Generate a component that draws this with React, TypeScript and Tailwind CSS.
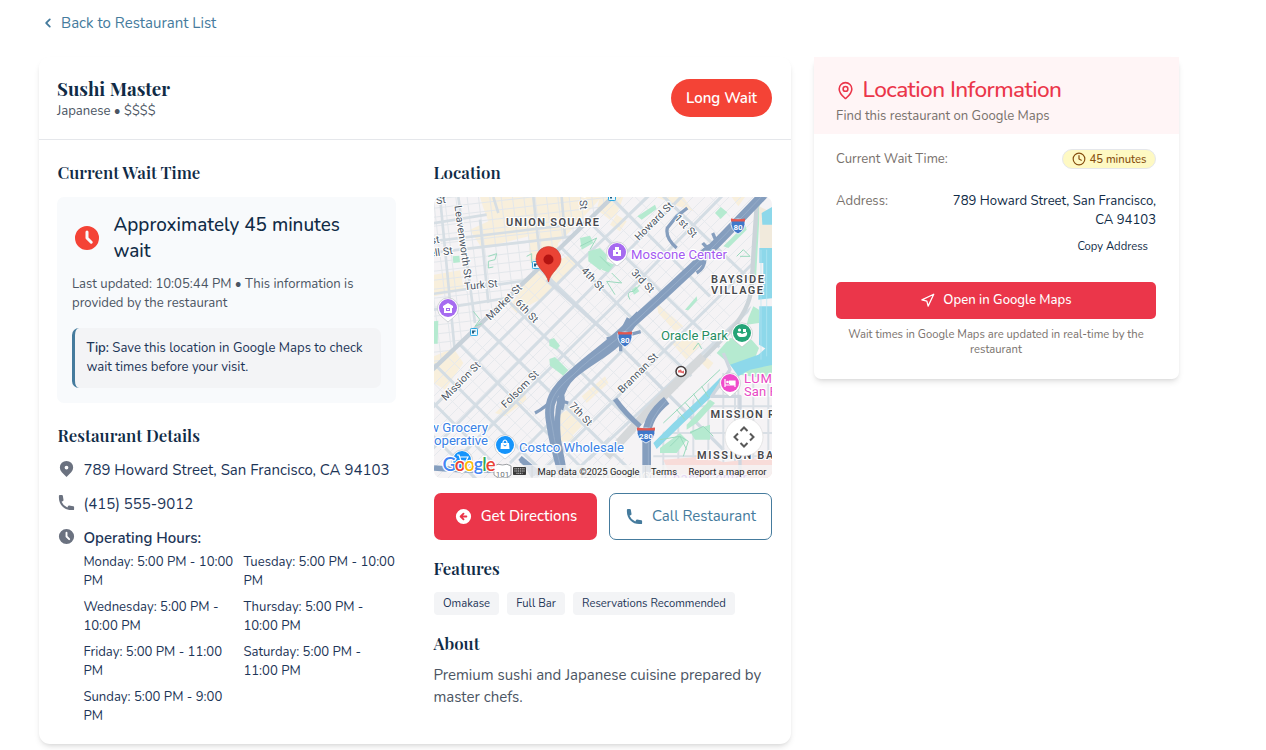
import React from "react";
import {
  HiArrowCircleLeft,
  HiChevronLeft,
  HiClock,
  HiLocationMarker,
  HiPhone,
} from "react-icons/hi";
import { Clock, MapPin, Navigation } from "lucide-react";

const hours = [
  ["Monday: 5:00 PM - 10:00", "PM"],
  ["Tuesday: 5:00 PM - 10:00", "PM"],
  ["Wednesday: 5:00 PM -", "10:00 PM"],
  ["Thursday: 5:00 PM -", "10:00 PM"],
  ["Friday: 5:00 PM - 11:00", "PM"],
  ["Saturday: 5:00 PM -", "11:00 PM"],
  ["Sunday: 5:00 PM - 9:00", "PM"],
];

const range = (from: number, to: number, step: number) =>
  Array.from({ length: Math.floor((to - from) / step) + 1 }, (_, i) => from + i * step);

function Heading({ children }: { children: React.ReactNode }) {
  return (
    <h2 className="pb-[2px] font-['Playfair_Display','Liberation_Serif',serif] text-[16.875px] leading-[26px] font-semibold whitespace-nowrap text-[#102b46]">
      {children}
    </h2>
  );
}

function StreetLabel({ x, y, angle, children }: { x: number; y: number; angle: number; children: string }) {
  return (
    <text
      transform={`translate(${x} ${y}) rotate(${angle})`}
      textAnchor="middle"
      dominantBaseline="central"
      fontSize="10.4"
      fill="#4a5462"
      stroke="#fff"
      strokeWidth="2"
      paintOrder="stroke"
      letterSpacing=".15"
    >
      {children}
    </text>
  );
}

function AreaLabel({ x, y, width, children }: { x: number; y: number; width: number; children: string }) {
  return (
    <text x={x} y={y} textLength={width} fontSize="11" fontWeight="600" fill="#48494d" stroke="#fff" strokeWidth="2.2" paintOrder="stroke">
      {children}
    </text>
  );
}

function Pin({ x, y, color, children }: { x: number; y: number; color: string; children?: React.ReactNode }) {
  return (
    <g transform={`translate(${x} ${y})`}>
      <path d="M0 14 L-6 9 A10.5 10.5 0 1 1 6 9 Z" fill="#fff" stroke="#b9bdc2" strokeWidth=".6" />
      <circle r="9" fill={color} />
      {children}
    </g>
  );
}

function Shield({ x, y, label }: { x: number; y: number; label: string }) {
  const w = label.length > 2 ? 9 : 7;
  return (
    <g transform={`translate(${x} ${y})`}>
      <path d={`M${-w} -6 Q0 -8 ${w} -6 Q${w + 1} 4 0 8 Q${-w - 1} 4 ${-w} -6Z`} fill="#3f77c9" stroke="#fff" strokeWidth=".8" />
      <path d={`M${-w} -7.5 Q0 -6 ${w} -7.5 V-4.5 H${-w}Z`} fill="#e25850" />
      <text y="3.7" textAnchor="middle" fontSize="8" fontWeight="700" fill="#fff">{label}</text>
    </g>
  );
}

/* Street network, drawn at three units to the pixel. */
function Streets() {
  return (
    <g transform="translate(430 193) scale(.33333)" fill="none">
      <defs>
        <clipPath id="north"><path d="M0 0H560L390 165L12 525H0Z" /></clipPath>
        <clipPath id="south"><path d="M560 0H975V270Q975 370 890 440L560 780L700 870H0V525L390 165Z" /></clipPath>
        <clipPath id="bay"><path d="M660 760L1030 360V870H640Z" /></clipPath>
      </defs>
      <g fill="#f8efdc">
        <path d="M150 12H515L430 105L385 150L375 205L300 210L296 130L155 165L120 110L175 85L160 45Z" />
        <path d="M300 250L330 230L420 185L440 215L350 310L310 330L260 360L240 340Z" />
        <path d="M12 245L90 232L102 290L12 310Z M12 490L70 465L100 510L45 590L12 570Z" />
        <path d="M510 12H580L560 65L540 80L500 50Z M680 12H760L790 55L745 40Z M905 12H945L925 40Z" />
        <path d="M385 665L445 635L455 700L420 735L385 720Z M370 690L445 740L375 750Z M195 660L280 580L290 620L225 670Z" />
        <path d="M455 610L525 550L535 570L470 630Z M680 330L760 400L735 415L685 360Z M725 450L765 415L815 455L770 500Z M820 485L850 510L835 530L805 500Z M560 65L590 85L570 115L540 95Z" />
      </g>
      <g clipPath="url(#north)">
        <g stroke="#e3e7eb" strokeWidth="3">
          {range(20, 700, 27).map((y) => <path key={y} d={`M0 ${y}L560 ${y - 64}`} />)}
          {range(-60, 540, 34).map((x) => <path key={x} d={`M${x} 0L${x + 62} 520`} />)}
        </g>
        <g stroke="#d6dee4" strokeWidth="8">
          <path d="M0 180L560 115M0 146L480 88M0 304L320 258M0 352L250 312M0 92L170 65M190 12L205 60M30 12L75 480M85 12L135 390M310 12L335 240M395 12L405 130M150 80L175 330" />
        </g>
      </g>
      <g clipPath="url(#south)">
        <g stroke="#e6e9ed" strokeWidth="3">
          {range(585, 1660, 36).map((n) => <path key={n} d={`M0 ${n}L${n} 0`} />)}
          {[-810, -720, -670, -590, -510, -455, -390, -335, -270, -205, -140, -75, 0, 55, 120, 190, 250, 310, 360, 440, 500, 560].map((n) => <path key={n} d={`M0 ${n}L900 ${n + 880}`} />)}
        </g>
        <g stroke="#d4dde4" strokeWidth="9">
          <path d="M0 652L430 225L665 0M0 775L500 270L765 0M90 790L560 330L885 0M240 810L580 470M300 870L990 190M475 800L980 330M400 870L540 735" />
          <path d="M345 115L700 470L900 660M290 190L560 450M200 290L690 770M130 370L620 850M70 435L500 870M0 500L370 870M0 620L240 860M465 75L790 390L930 520M550 20L840 310M690 0L960 260M0 720L150 870" />
        </g>
      </g>
      <path d="M0 537L390 165L560 0" stroke="#c7d1d9" strokeWidth="13" />
      <path d="M350 260L540 430L880 770" stroke="#d1dae2" strokeWidth="10" />
      <g clipPath="url(#bay)" stroke="#d9dfe5" strokeWidth="6">
        {range(700, 1020, 45).map((x) => <path key={x} d={`M${x} 540V870`} />)}
        <path d="M670 790H1030M700 720H1030M800 640H1030M915 600V850" />
      </g>
    </g>
  );
}

function Terrain() {
  return (
    <g transform="translate(430 193) scale(.33333)" fill="none" strokeLinecap="butt" strokeLinejoin="round">
      <g fill="#b5ead0">
        <path d="M475 175L510 165L530 185V215L510 232L475 205Z M450 135L480 128L490 150L455 170Z M530 205L552 215L535 238L515 230Z" />
        <path d="M68 190L88 188L90 208L70 210Z M12 385L25 383L23 452L12 452Z M358 440L372 435L390 458L380 470L358 458Z M358 498L375 492L415 532L400 548L360 518Z" />
        <path d="M622 70L675 35L680 48L635 80Z M855 60L872 42L892 58L872 78Z M765 350L800 310L802 322L775 352Z M605 290L618 280L628 295L612 305Z" />
        <path d="M880 160L945 95L950 110L895 165Z M975 12H990L987 95L977 275L970 220Z M955 375L970 340L987 350V390L950 395Z" />
        <path d="M860 480L900 435L965 440L987 465L975 495L905 520Z M910 510L1030 490V560L930 545Z" />
        <path d="M770 695L840 620L855 630L800 690L770 710Z M690 765L750 720L770 740L740 780H690Z M780 715L840 695V740H795Z" />
      </g>
      <path d="M700 800L830 790L880 808L1030 790V870H730Z" fill="#f8dcd9" />
      <path d="M987 40L1030 60V170H990Z" fill="#f1eadc" />
      <path d="M995 60L1030 40V95H997Z M988 165H1030V315L985 320V285H1000V210H988Z M988 340H1030V480L987 455Z M900 515L985 485L1030 445V515L960 530L925 550Z" fill="#8dd8ea" />
      <path d="M993 170V500M1010 170V490" stroke="#b9e7f2" strokeWidth="2" />
      <path d="M870 555L805 620L730 690L670 750L680 768L760 690L850 605L900 550Z" fill="#8dd8ea" />
      <g stroke="#9ad9bd" strokeWidth="3">
        <path d="M700 690L870 530M740 650L765 680M765 628L790 657M790 602L812 635M815 580L835 612M175 190l25-8-5 18-20 5v20l15-3M450 160l50-25-20 35M510 190l30 30M545 240l30 30-45-5 25 40M920 190l20-20 20 20h-30M130 355l20 25-15 20 20-8M600 320q-15-25 10-25l20-20M790 470l15-20 10 18M720 760l30-30 25 15-15 45" />
        <path d="M690 740l60-10 20 40M780 720l40-20 30 30M290 190l15-8v28" />
      </g>
      <path d="M983 0Q970 170 965 280Q960 350 895 420L560 760" stroke="#ccd4d9" strokeWidth="13" />
      <path d="M530 790L650 660L820 490" stroke="#d5d8da" strokeWidth="26" />
      <path d="M880 480L900 530L845 610H930V850" stroke="#ced6df" strokeWidth="10" />
      <g stroke="#859ebe">
        <path d="M1010 -5L890 120L790 222L690 315L600 395" strokeWidth="28" />
        <path d="M630 365C540 460 500 475 430 540C370 590 350 630 362 690C370 750 380 780 405 870" strokeWidth="27" />
        <path d="M615 385C560 480 500 490 430 550C375 600 380 690 385 740L405 850" strokeWidth="16" />
        <path d="M375 612Q345 645 315 660M380 620L415 630M395 600Q405 620 395 650M810 180L835 160L860 150Q855 135 848 120M818 150Q825 160 840 168M800 240Q825 225 825 195M530 438L600 425L632 416M572 475V420L595 375M740 165Q705 135 712 105L740 70L772 45" strokeWidth="10" />
        <path d="M310 850Q290 810 272 800M270 795L330 845M12 825Q140 835 200 830" strokeWidth="16" />
        <path d="M555 618Q585 660 630 700" strokeWidth="15" />
        <path d="M710 622Q650 670 650 730V870" strokeWidth="26" />
      </g>
      <path d="M1010 -5L890 120L790 222L690 315L600 400C540 465 500 475 430 545C370 595 350 630 365 690C375 750 380 780 405 870M655 870V730Q655 680 710 622" stroke="#9fb4cd" strokeWidth="2" />
    </g>
  );
}

function MapView() {
  return (
    <svg viewBox="434 197 338 281" className="block h-[281px] w-[338px] rounded-[7px] font-[Roboto,sans-serif]">
      <rect x="434" y="197" width="338" height="281" fill="#f5f3f5" />
      <Streets />
      <Terrain />
      <StreetLabel x={441} y={200} angle={-8}>St</StreetLabel>
      <StreetLabel x={463} y={242} angle={82}>Leavenworth St</StreetLabel>
      <StreetLabel x={435} y={240} angle={-8}>st</StreetLabel>
      <StreetLabel x={441} y={252} angle={-8}>ell St</StreetLabel>
      <StreetLabel x={481} y={285} angle={-6}>Turk St</StreetLabel>
      <StreetLabel x={504} y={302} angle={-45}>Market St</StreetLabel>
      <StreetLabel x={527} y={311} angle={46}>6th St</StreetLabel>
      <StreetLabel x={593} y={279} angle={46}>4th St</StreetLabel>
      <StreetLabel x={583} y={201} angle={85}>y St</StreetLabel>
      <StreetLabel x={654} y={221} angle={-45}>Howard St</StreetLabel>
      <StreetLabel x={686} y={226} angle={46}>1st St</StreetLabel>
      <StreetLabel x={643} y={281} angle={46}>3rd St</StreetLabel>
      <StreetLabel x={461} y={381} angle={-45}>Mission St</StreetLabel>
      <StreetLabel x={520} y={389} angle={-45}>Folsom St</StreetLabel>
      <StreetLabel x={581} y={414} angle={46}>7th St</StreetLabel>
      <StreetLabel x={638} y={373} angle={-45}>Brannan St</StreetLabel>
      <AreaLabel x={506} y={225.5} width={93}>UNION SQUARE</AreaLabel>
      <AreaLabel x={711} y={283} width={53}>BAYSIDE</AreaLabel>
      <AreaLabel x={711} y={294} width={52}>VILLAGE</AreaLabel>
      <AreaLabel x={710.5} y={418} width={90}>MISSION ROCK</AreaLabel>
      <AreaLabel x={697} y={458.5} width={84}>MISSION BAY</AreaLabel>
      <Shield x={738} y={226} label="80" />
      <Shield x={625} y={339} label="80" />
      <Shield x={646} y={435} label="280" />
      {[[536, 265], [474, 332], [612, 197]].map(([x, y], i) => (
        <g key={i} transform={`translate(${x} ${y})`}>
          <rect x="-3.5" y="-3.5" width="7" height="7" rx=".8" fill="#e8f8ff" stroke="#2fa9e2" />
          <path d="M-2-1.500h3.500v1.200h-1.500v1.800h-2z" fill="#235e83" />
        </g>
      ))}
      <g fontSize="13" stroke="#fff" strokeWidth="2.5" paintOrder="stroke" strokeLinejoin="round">
        <text x="631" y="258.500" textLength="96" lengthAdjust="spacingAndGlyphs" fill="#a45af1">Moscone Center</text>
        <text x="661" y="340" textLength="67" lengthAdjust="spacingAndGlyphs" fill="#258d63">Oracle Park</text>
        <text x="744" y="383" textLength="37" fill="#e749c4">LUMA</text>
        <text x="744" y="396" textLength="37" fill="#e749c4">San Fr</text>
        <text x="429" y="431.500" textLength="59" lengthAdjust="spacingAndGlyphs" fill="#3981e6">w Grocery</text>
        <text x="434" y="444.500" textLength="54" lengthAdjust="spacingAndGlyphs" fill="#3981e6">operative</text>
        <text x="519" y="452" textLength="105" lengthAdjust="spacingAndGlyphs" fill="#3981e6">Costco Wholesale</text>
        <text x="553" y="481" fontSize="10.400" textLength="104" fill="#a9abaf">DESIGN DISTRICT</text>
        <text x="664" y="482" textLength="83" fill="#a45af1">Chase Center</text>
      </g>
      <Pin x={617} y={252} color="#a66bf0">
        <path d="M-4-2h2v-3h4v3h2v6h-8z" fill="#fff" /><path d="M-1 0h2v2h-2z" fill="#a66bf0" />
      </Pin>
      <Pin x={448} y={308} color="#a66bf0">
        <path d="M-5-2L0-5L5-2V0H4V5H-4V0H-5Z" fill="#fff" /><path d="M-2 0h4v3h-4z" fill="#a66bf0" /><path d="M-1 1h2v1h-2z" fill="#fff" />
      </Pin>
      <Pin x={742} y={333} color="#24a477">
        <path d="M-5 0Q-2-1 0 1L5-1Q6 4 1 4H-2Q-5 3-5 0ZM1-4H4V-1H1Z" fill="#fff" /><circle cx="-2.500" cy="-3" r="1.600" fill="#fff" />
      </Pin>
      <Pin x={730} y={383} color="#f04bcb">
        <path d="M-5-4V4M-5 2H5V4M5 2V-2H-.5V1" stroke="#fff" strokeWidth="1.200" fill="none" /><path d="M0-2H5V2H0Z" fill="#fff" /><circle cx="-2.500" cy="-1" r="1.300" fill="#fff" />
      </Pin>
      <Pin x={505} y={445} color="#1594fb">
        <path d="M-4-2h8l.5 6h-9z" fill="#fff" /><path d="M-2-2v-1q2-4 4 0v1" stroke="#fff" fill="none" strokeWidth="1.200" /><path d="M-1.500 0Q0 2 1.500 0" stroke="#1594fb" fill="none" />
      </Pin>
      <Pin x={462} y={460} color="#1594fb">
        <path d="M-5-5h2l2 6h5l2-4h-8" stroke="#fff" strokeWidth="1.200" fill="none" />
      </Pin>
      <g transform="translate(681 371.500)">
        <circle r="5" fill="#fff" stroke="#453c3c" strokeWidth="1.500" /><path d="M-3 1V-1L0-2L1 0L3-1V2L-1 1Z" fill="#e4696a" />
      </g>
      <path d="M548.500 282C546.500 272 536 268 536 259A12.500 12.500 0 0 1 561 259C561 268 550.500 272 548.500 282Z" fill="#ea4335" stroke="#c5372c" strokeWidth=".6" />
      <circle cx="548.500" cy="259.500" r="5" fill="#b31412" />
      <path d="M512 465H772V478H512Z" fill="#f5f5f5" fillOpacity=".8" />
      <path d="M532 466V478M645.500 466V478" stroke="#d3d5d8" strokeWidth=".8" />
      <path d="M494 466Q498 463 502.500 465Q507 463 511 466V475Q507 479 502.500 478Q498 479 494 475Z" fill="#fff" stroke="#85898d" strokeWidth=".8" />
      <text x="502.500" y="476.500" textAnchor="middle" fontSize="8" fill="#6b7075">101</text>
      <rect x="513" y="467" width="13" height="8" rx=".8" fill="#3a3a3a" />
      <path d="M514.500 468.800H525M514.500 471H525M516.500 473.300H522.500" stroke="#fff" strokeWidth=".9" strokeDasharray="1 .8" />
      <g fontSize="9.300" fill="#1e1e1e">
        <text x="537.500" y="475" textLength="102" lengthAdjust="spacingAndGlyphs">Map data ©2025 Google</text>
        <text x="651" y="475" textLength="26" lengthAdjust="spacingAndGlyphs">Terms</text>
        <text x="688.500" y="475" textLength="78" lengthAdjust="spacingAndGlyphs">Report a map error</text>
      </g>
      <text x="442.500" y="471" fontSize="18.500" fontFamily="Lato, sans-serif" fontWeight="600" textLength="53" stroke="#fff" strokeWidth="2.500" paintOrder="stroke">
        <tspan fill="#4285f4">G</tspan><tspan fill="#ea4335">o</tspan><tspan fill="#fbbc04">o</tspan><tspan fill="#4285f4">g</tspan><tspan fill="#34a853">l</tspan><tspan fill="#ea4335">e</tspan>
      </text>
      <circle cx="744" cy="437" r="19" fill="#fff" stroke="#ddd" strokeWidth=".7" />
      <path d="M740.500 431l3.500-3.500 3.500 3.500M740.500 443l3.500 3.500 3.500-3.500M738 433.500l-3.500 3.500 3.500 3.500M750 433.500l3.500 3.500-3.500 3.500" fill="none" stroke="#595959" strokeWidth="2" />
    </svg>
  );
}

export default function App() {
  return (
    <div className="h-[750px] overflow-hidden bg-white font-[Nunito,Lato,sans-serif] text-[13.125px] leading-[19px] text-[#1d3557]">
      <a className="ml-[39px] flex h-[46px] w-fit items-center text-[15px] text-[#457b9d]">
        <HiChevronLeft className="mr-1 size-[18px]" />
        <span>Back to Restaurant List</span>
      </a>
      <div className="mt-[11px] ml-[39px] flex items-start gap-[23px] whitespace-nowrap">
        <main className="h-[686.500px] w-[752px] shrink-0 rounded-[11px] bg-white shadow-md">
          <header className="flex h-[83px] items-center justify-between border-b border-[#e5e7eb] pr-[19px] pl-[18px]">
            <div>
              <h1 className="font-['Playfair_Display','Liberation_Serif',serif] text-[18.75px] leading-[26px] font-bold text-[#102b46]">Sushi Master</h1>
              <p className="text-[#4b5563]">Japanese • $$$$</p>
            </div>
            <span className="flex h-[38px] w-[101px] items-center justify-center rounded-full bg-[#f44336] text-[15px] font-semibold text-white">Long Wait</span>
          </header>
          <div className="grid grid-cols-[338.6px_338px] gap-[38px] pt-[19px] pl-[18.400px]">
            <section>
              <Heading>Current Wait Time</Heading>
              <div className="mt-[10px] mb-[19px] rounded-[7px] bg-[#f8fafc] p-[15px]">
                <div className="flex h-[52px] items-center gap-[11px] text-[18.900px] leading-[26px] font-medium text-[#102b46]">
                  <HiClock className="size-[30px] shrink-0 text-[#f44336]" />
                  <p>Approximately 45 minutes<br />wait</p>
                </div>
                <p className="mt-[10.500px] -ml-[.4px] text-[#4b5563]">Last updated: 10:05:44 PM • This information is<br />provided by the restaurant</p>
                <p className="mt-[15.500px] h-[60px] rounded-[7px] border-l-[3px] border-[#457b9d] bg-[#f3f4f6] px-[11px] py-[11px]"><span className="font-semibold">Tip:</span> Save this location in Google Maps to check<br />wait times before your visit.</p>
              </div>
              <Heading>Restaurant Details</Heading>
              <div className="mt-[9px] flex flex-col gap-[11.500px] text-[15px] leading-[22.500px]">
                <div className="flex gap-[7.400px]"><HiLocationMarker className="-ml-[.4px] size-[19px] text-[#6b7280]" />789 Howard Street, San Francisco, CA 94103</div>
                <div className="flex gap-[7.400px]"><HiPhone className="-ml-[.4px] size-[19px] text-[#6b7280]" />(415) 555-9012</div>
                <div className="flex gap-[7.400px]">
                  <HiClock className="-ml-[.4px] size-[19px] shrink-0 text-[#6b7280]" />
                  <div className="grow">
                    <p className="font-semibold">Operating Hours:</p>
                    <div className="mt-[3px] grid grid-cols-[152px_152px] gap-x-[8px] gap-y-[7px] text-[13.125px] leading-[19px]">
                      {hours.map(([a, b]) => <p key={a}>{a}<br />{b}</p>)}
                    </div>
                  </div>
                </div>
              </div>
            </section>
            <section>
              <div className="-ml-[.6px]"><Heading>Location</Heading></div>
              <div className="mt-[10px]"><MapView /></div>
              <div className="mt-[15px] grid grid-cols-2 gap-3 text-[15px]">
                <button className="flex h-[47px] items-center justify-center gap-[8px] rounded-[7px] bg-[#eb364a] font-medium text-white"><HiArrowCircleLeft className="size-[19px]" />Get Directions</button>
                <button className="flex h-[47px] items-center justify-center gap-[8px] rounded-[7px] border border-[#457b9d] text-[#457b9d]"><HiPhone className="size-[19px]" />Call Restaurant</button>
              </div>
              <div className="mt-[15px] -ml-[.6px]"><Heading>Features</Heading></div>
              <div className="mt-[9px] flex gap-2 text-[11.250px]">
                <span className="flex h-[23px] w-[65px] items-center justify-center rounded-[4px] bg-[#f3f4f6]">Omakase</span>
                <span className="flex h-[23px] w-[58px] items-center justify-center rounded-[4px] bg-[#f3f4f6]">Full Bar</span>
                <span className="flex h-[23px] w-[162px] items-center justify-center rounded-[4px] bg-[#f3f4f6]">Reservations Recommended</span>
              </div>
              <div className="mt-[15px] -ml-[.6px]"><Heading>About</Heading></div>
              <p className="mt-[6px] -ml-[.6px] text-[15px] leading-[22px] text-[#4b5563]">Premium sushi and Japanese cuisine prepared by<br />master chefs.</p>
            </section>
          </div>
        </main>
        <aside className="h-[322px] w-[365px] shrink-0 rounded-[7px] bg-white shadow-md">
          <header className="h-[77px] bg-[#fff5f6] px-[22px] pt-[19px]">
            <h2 className="flex h-[26px] items-center gap-[7.500px] text-[22.600px] font-medium tracking-tight text-[#eb364a]"><MapPin className="mt-[2px] size-[19px]" />Location Information</h2>
            <p className="mt-[4.500px] text-[#78716c]">Find this restaurant on Google Maps</p>
          </header>
          <div className="flex flex-col pt-[15px] pr-[23px] pl-[22px] text-[#78716c]">
            <div className="flex h-[20px] items-center justify-between">
              <span>Current Wait Time:</span>
              <span className="flex h-[20px] w-[94px] items-center justify-center gap-[4px] rounded-full border border-[#e5e7eb] bg-[#fef9c3] text-[11.250px] font-medium text-[#854d0e]"><Clock className="size-[14px]" />45 minutes</span>
            </div>
            <div className="mt-[22.500px] flex justify-between">
              <span>Address:</span>
              <span className="text-right text-[#102b46]">789 Howard Street, San Francisco,<br />CA 94103</span>
            </div>
            <button className="mt-[7px] mr-[8px] self-end text-[11.250px] text-[#102b46]">Copy Address</button>
            <button className="mt-[26.500px] flex h-[37px] items-center justify-center gap-[8px] rounded-[5px] bg-[#eb364a] font-medium text-white"><Navigation className="size-[15px]" />Open in Google Maps</button>
            <p className="mt-[8px] text-center text-[11.250px] leading-[15px]">Wait times in Google Maps are updated in real-time by the<br />restaurant</p>
          </div>
        </aside>
      </div>
    </div>
  );
}
